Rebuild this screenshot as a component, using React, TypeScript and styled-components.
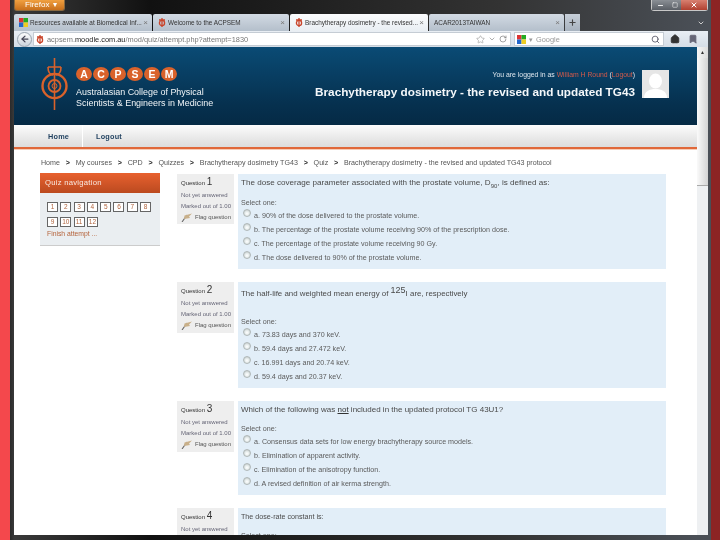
import React from "react";
import styled, { createGlobalStyle } from "styled-components";
import { ArrowLeft, Star, RotateCw, Search, Home, ChevronDown, Plus, Minus, Square, X, Bookmark } from "lucide-react";

const Global = createGlobalStyle`
  html, body { margin: 0; padding: 0; background: #000; }
  body { font-family: "Liberation Sans", Arial, sans-serif; }
`;
const Root = styled.div`
  width: 720px; height: 540px; overflow: hidden; display: flex;
  filter: blur(0.35px);
`;
const RedLeft = styled.div`width: 10px; background: #f4484c; flex: none;`;
const RedRight = styled.div`width: 9px; background: #8c2424; flex: none;`;
const Win = styled.div`
  flex: 1; min-width: 0; display: flex; flex-direction: column; padding: 0 3px 5px 4px;
  background: linear-gradient(90deg, #2a2a2a 0, #3a3a3a 0.6%, #111 20%, #333 70%, #4a4f56 98%);
`;
const TitleBar = styled.div`
  height: 14px; flex: none; display: flex; justify-content: space-between; align-items: flex-start;
`;
const FirefoxBtn = styled.div`
  width: 51px; height: 11px; background: linear-gradient(#f0a040, #c9701c); color: #fff;
  font-size: 8px; line-height: 10px; padding-left: 10px; box-sizing: border-box; border: 1px solid #8a6a40;
  border-top: none; border-radius: 0 0 3px 3px; display: flex; gap: 4px;
`;
const WinCtrls = styled.div`
  display: flex; height: 11px; width: 57px; border: 1px solid #c8c8c8; border-top: none; border-radius: 0 0 3px 3px; box-sizing: border-box;
`;
const WinBtn = styled.div<{ $w: number; $close?: boolean }>`
  width: ${p => p.$w}px; display: flex; align-items: center; justify-content: center; color: #fff;
  background: ${p => p.$close ? "linear-gradient(#d88070,#b04030)" : "linear-gradient(#8a8f95,#5a5f66)"};
`;
const TabRow = styled.div`
  height: 17px; flex: none; display: flex; gap: 1px; align-items: stretch;
`;
const Tab = styled.div<{ $w: number; $active?: boolean }>`
  width: ${p => p.$w}px; flex: none; display: flex; align-items: center; gap: 2px; padding: 0 4px 0 5px; box-sizing: border-box;
  border-radius: 2px 2px 0 0; font-size: 6.4px; color: #333; white-space: nowrap;
  background: ${p => p.$active ? "linear-gradient(#fbfcfd,#e9eef3)" : "linear-gradient(#d2dae3,#b4bfcb)"};
`;
const TabLabel = styled.span`flex: 1; min-width: 0;`;
const TabClose = styled.span`color: #777; font-size: 8px;`;
const NewTab = styled.div`
  width: 15px; flex: none; display: flex; align-items: center; justify-content: center; color: #444;
  background: linear-gradient(#c6ced8,#a7b2be);
`;
const AllTabs = styled.div`
  flex: 1; display: flex; justify-content: flex-end; align-items: center; color: #ccc; padding-right: 3px;
`;
const Toolbar = styled.div`
  height: 16px; flex: none; display: flex; align-items: center; gap: 3px; background: linear-gradient(#e9eef4,#d5dde6);
  padding-left: 3px; padding-right: 6px;
`;
const BackBtn = styled.div`
  width: 15px; height: 15px; border-radius: 50%; flex: none; background: linear-gradient(#fdfdfd,#ccd4dc); border: 1px solid #9aa5b0;
  box-sizing: border-box; display: flex; align-items: center; justify-content: center; color: #445;
`;
const UrlBar = styled.div`
  width: 478px; height: 14px; flex: none; background: #fff; border: 1px solid #c5ccd4; box-sizing: border-box; margin-left: -2px;
  display: flex; align-items: center; font-size: 7.4px; color: #777; gap: 3px; padding: 0 3px 0 2px;
`;
const UrlText = styled.span`flex: 1; white-space: nowrap; b { color: #222; font-weight: normal; }`;
const SearchBar = styled(UrlBar)`width: 150px; margin-left: 0; gap: 3px; color: #999;`;
const ToolIcon = styled.div`width: 15px; flex: none; display: flex; justify-content: center; color: #333;`;
const Viewport = styled.div`flex: 1; min-height: 0; display: flex;`;
const Page = styled.div`flex: 1; min-width: 0; background: #fff; overflow: hidden;`;
const Scrollbar = styled.div`
  width: 11px; flex: none; background: #eef0f2; display: flex; flex-direction: column; align-items: stretch;
`;
const ScrollBtn = styled.div`height: 11px; background: linear-gradient(90deg,#f6f6f6,#dcdcdc); color: #333; font-size: 5px; text-align: center; line-height: 11px;`;
const Thumb = styled.div`height: 127px; background: linear-gradient(90deg,#fafafa,#d4d4d4); border: 1px solid #aaa; border-width: 0 0 1px 0;`;
const Header = styled.header`
  height: 78px; background: linear-gradient(#0a4b75, #06304e 75%, #052a45); display: flex; align-items: flex-start;
  padding: 11px 28px 0 27px; box-sizing: border-box;
`;
const LogoWrap = styled.div`display: flex; gap: 8px; flex: none;`;
const Brand = styled.div`display: flex; flex-direction: column; padding-top: 9px;`;
const Letters = styled.div`display: flex; gap: 1px; margin-bottom: 6px;`;
const Letter = styled.span`
  width: 16px; height: 14px; border-radius: 50%; background: #d9622b; color: #fff; font-weight: bold; font-size: 10.5px;
  display: flex; align-items: center; justify-content: center;
`;
const BrandLine = styled.div`color: #f0f4f7; font-size: 8.95px; line-height: 11px; white-space: nowrap;`;
const HeaderRight = styled.div`flex: 1; display: flex; justify-content: flex-end; align-items: flex-start; gap: 7px; padding-top: 12px;`;
const HeaderText = styled.div`display: flex; flex-direction: column; align-items: flex-end;`;
const Logged = styled.div`color: #dfe7ee; font-size: 6.85px; line-height: 10px; white-space: nowrap; a { color: #d35a4a; }`;
const CourseTitle = styled.div`color: #f4f7fa; font-weight: bold; font-size: 11.75px; line-height: 14px; margin-top: 5px; white-space: nowrap;`;
const Avatar = styled.div`width: 27px; height: 28px; background: #e6e6e6; flex: none; overflow: hidden; display: flex;`;
const Nav = styled.nav`
  height: 24px; box-sizing: border-box; display: flex; background: linear-gradient(#fcfcfc,#dcdcdc);
  border-bottom: 2px solid #e0683a; box-shadow: 0 1px 0 #f7cdb8;
`;
const NavItem = styled.div<{ $w: number; $pad: number; $first?: boolean }>`
  width: ${p => p.$w}px; padding-left: ${p => p.$pad}px; box-sizing: border-box; font-size: 7.3px; font-weight: bold; line-height: 23px; letter-spacing: .2px;
  color: #1e3f5e; border-right: ${p => p.$first ? "1px solid #fff" : "none"};
`;
const Crumbs = styled.div`
  display: flex; gap: 5.8px; align-items: center; padding: 4px 0 0 27px; height: 24px; box-sizing: border-box; font-size: 7.1px; color: #555; white-space: nowrap;
`;
const Sep = styled.span`color: #222; font-weight: bold;`;
const Columns = styled.div`display: flex; align-items: flex-start; gap: 17px; padding-left: 26px;`;
const Block = styled.aside`width: 120px; flex: none; background: #eaeef1; border-bottom: 1px solid #ccc; height: 72px;`;
const BlockHead = styled.div`
  height: 20px; background: linear-gradient(#e8612f,#bb4a20); color: #f8e8e0; font-size: 7.7px; line-height: 20px; padding-left: 5px; letter-spacing: .25px;
`;
const NumGrid = styled.div`display: flex; flex-wrap: wrap; gap: 5px 2.3px; padding: 9px 4px 0 7px;`;
const Num = styled.span`
  width: 11px; height: 10px; box-sizing: border-box; background: #fff; border: 1.3px solid #666; color: #b0653f; font-size: 6.5px; line-height: 8px; text-align: center;
`;
const Finish = styled.div`font-size: 6.8px; color: #b5643c; padding: 2px 0 0 7px; line-height: 9px;`;
const Questions = styled.div`width: 489px; flex: none; display: flex; flex-direction: column; gap: 13px; padding-top: 1px;`;
const Q = styled.section`display: flex; gap: 4px; align-items: flex-start;`;
const Info = styled.div<{ $h: number }>`
  width: 57px; height: ${p => p.$h}px; flex: none; background: #eeeeee; padding: 1px 0 0 4px; box-sizing: border-box; color: #555; font-size: 6px;
`;
const QNo = styled.div`line-height: 14px; white-space: nowrap; font-size: 6px; color: #333; b { font-size: 10px; font-weight: normal; }`;
const InfoLine = styled.div`line-height: 10.5px; white-space: nowrap; color: #667;`;
const FlagRow = styled.div`display: flex; align-items: center; gap: 2px; margin-top: 1px; line-height: 11px; white-space: nowrap;`;
const Content = styled.div<{ $top: number; $bottom: number }>`
  flex: 1; background: #e2eef8; padding: ${p => p.$top}px 0 ${p => p.$bottom}px 3px; color: #5a5a5a; font-size: 7.15px;
`;
const QText = styled.div<{ $gap: number; $size: number }>`
  line-height: 14px; margin-bottom: ${p => p.$gap}px; white-space: nowrap; color: #4a4a4a; font-size: ${p => p.$size}px;
  sup { font-size: 9px; line-height: 0; vertical-align: 3px; }
  sub { font-size: 6px; line-height: 0; }
  u { color: #333; }
`;
const Select = styled.div`line-height: 11px;`;
const Option = styled.div`display: flex; height: 14px; align-items: flex-start; line-height: 14px; white-space: nowrap; gap: 3px; padding-left: 2px;`;
const Radio = styled.span`
  width: 8px; height: 8px; flex: none; border-radius: 50%; margin-top: 0; box-sizing: border-box; border: 1px solid #b0b8b8;
  background: radial-gradient(circle at 50% 60%, #fff 0, #e8eeee 40%, #b8c0c0 100%);
`;

const Logo = () => (
  <svg width="27" height="52" viewBox="0 0 27 52" fill="none" stroke="#d9622b">
    <path d="M13.5 0V52" strokeWidth="1.6" />
    <path d="M7 9h13M7 9c0 6 2 7 5 8M20 9c0 6-2 7-5 8" strokeWidth="1.6" />
    <circle cx="13.5" cy="28" r="12" strokeWidth="2.4" />
    <circle cx="13.5" cy="28" r="6" strokeWidth="1.8" />
    <circle cx="13.5" cy="28" r="2.5" strokeWidth="1" />
  </svg>
);
const Colors = () => (
  <svg width="9" height="9" viewBox="0 0 9 9" style={{ flex: "none" }}>
    <rect width="4.5" height="4.5" fill="#d33" /><rect x="4.5" width="4.5" height="4.5" fill="#2a2" />
    <rect y="4.5" width="4.5" height="4.5" fill="#26c" /><rect x="4.5" y="4.5" width="4.5" height="4.5" fill="#ec2" />
  </svg>
);
const Fav = () => (
  <svg width="8" height="9" viewBox="0 0 8 9" fill="none" stroke="#c9442a" strokeWidth="1.3" style={{ flex: "none" }}>
    <path d="M4 0v9M1 2h6" /><circle cx="4" cy="5" r="2.6" />
  </svg>
);
const Flag = () => (
  <svg width="12" height="9" viewBox="0 0 12 9" fill="none" style={{ flex: "none" }}>
    <path d="M1 9L6 2" stroke="#666" strokeWidth="1.1" /><path d="M3.5 2.5L11 .5 8 3.5 9 5 3 6z" fill="#c9b08a" />
  </svg>
);
const Silhouette = () => (
  <svg width="27" height="28" viewBox="0 0 27 28">
    <ellipse cx="13.5" cy="11" rx="6.5" ry="7.5" fill="#fff" /><path d="M2 28c0-7 6-9 11.5-9S25 21 25 28z" fill="#fff" />
  </svg>
);

type QD = { n: number; h: number; top: number; gap: number; bottom: number; size: number; text: React.ReactNode; opts: string[] };
const data: QD[] = [
  { n: 1, h: 50, top: 2, gap: 8, bottom: 4, size: 8.1, text: <>The dose coverage parameter associated with the prostate volume, D<sub>90</sub>, is defined as:</>,
    opts: ["a. 90% of the dose delivered to the prostate volume.", "b. The percentage of the prostate volume receiving 90% of the prescription dose.", "c. The percentage of the prostate volume receiving 90 Gy.", "d. The dose delivered to 90% of the prostate volume."] },
  { n: 2, h: 51, top: 5, gap: 16, bottom: 4, size: 7.9, text: <>The half-life and weighted mean energy of <sup>125</sup>I are, respectively</>,
    opts: ["a. 73.83 days and 370 keV.", "b. 59.4 days and 27.472 keV.", "c. 16.991 days and 20.74 keV.", "d. 59.4 days and 20.37 keV."] },
  { n: 3, h: 51, top: 2, gap: 7, bottom: 4, size: 8, text: <>Which of the following was <u>not</u> included in the updated protocol TG 43U1?</>,
    opts: ["a. Consensus data sets for low energy brachytherapy source models.", "b. Elimination of apparent activity.", "c. Elimination of the anisotropy function.", "d. A revised definition of air kerma strength."] },
  { n: 4, h: 51, top: 2, gap: 7, bottom: 5, size: 7.15, text: <>The dose-rate constant is:</>, opts: [] },
];

export default function App() {
  return (
    <Root>
      <Global />
      <RedLeft />
      <Win>
        <TitleBar>
          <FirefoxBtn>Firefox <span>▾</span></FirefoxBtn>
          <WinCtrls>
            <WinBtn $w={16}><Minus size={7} strokeWidth={3} /></WinBtn>
            <WinBtn $w={13}><Square size={6} strokeWidth={2} /></WinBtn>
            <WinBtn $w={26} $close><X size={8} strokeWidth={3} /></WinBtn>
          </WinCtrls>
        </TitleBar>
        <TabRow>
          <Tab $w={138}><Colors /><TabLabel>Resources available at Biomedical Inf...</TabLabel><TabClose>×</TabClose></Tab>
          <Tab $w={136}><Fav /><TabLabel>Welcome to the ACPSEM</TabLabel><TabClose>×</TabClose></Tab>
          <Tab $w={138} $active><Fav /><TabLabel>Brachytherapy dosimetry - the revised...</TabLabel><TabClose>×</TabClose></Tab>
          <Tab $w={135}><TabLabel>ACAR2013TAIWAN</TabLabel><TabClose>×</TabClose></Tab>
          <NewTab><Plus size={9} strokeWidth={3} /></NewTab>
          <AllTabs><ChevronDown size={8} strokeWidth={3} /></AllTabs>
        </TabRow>
        <Toolbar>
          <BackBtn><ArrowLeft size={10} strokeWidth={3} /></BackBtn>
          <UrlBar>
            <Fav />
            <UrlText>acpsem.<b>moodle.com.au</b>/mod/quiz/attempt.php?attempt=1830</UrlText>
            <Star size={9} color="#aaa" /><ChevronDown size={8} color="#888" /><RotateCw size={8} color="#777" />
          </UrlBar>
          <SearchBar>
            <Colors /><span>▾</span><UrlText>Google</UrlText><Search size={9} color="#445" />
          </SearchBar>
          <ToolIcon><Home size={10} fill="#333" /></ToolIcon>
          <ToolIcon><Bookmark size={10} fill="#667" color="#667" /></ToolIcon>
        </Toolbar>
        <Viewport>
          <Page>
            <Header>
              <LogoWrap>
                <Logo />
                <Brand>
                  <Letters>{"ACPSEM".split("").map(l => <Letter key={l}>{l}</Letter>)}</Letters>
                  <BrandLine>Australasian College of Physical</BrandLine>
                  <BrandLine>Scientists &amp; Engineers in Medicine</BrandLine>
                </Brand>
              </LogoWrap>
              <HeaderRight>
                <HeaderText>
                  <Logged>You are logged in as <a>William H Round</a> (<a>Logout</a>)</Logged>
                  <CourseTitle>Brachytherapy dosimetry - the revised and updated TG43</CourseTitle>
                </HeaderText>
                <Avatar><Silhouette /></Avatar>
              </HeaderRight>
            </Header>
            <Nav>
              <NavItem $w={69} $pad={34} $first>Home</NavItem>
              <NavItem $w={90} $pad={13}>Logout</NavItem>
            </Nav>
            <Crumbs>
              {["Home", "My courses", "CPD", "Quizzes", "Brachytherapy dosimetry TG43", "Quiz", "Brachytherapy dosimetry - the revised and updated TG43 protocol"].map((c, i, a) => (
                <React.Fragment key={c}>
                  <span>{c}</span>{i < a.length - 1 && <Sep>&gt;</Sep>}
                </React.Fragment>
              ))}
            </Crumbs>
            <Columns>
              <Block>
                <BlockHead>Quiz navigation</BlockHead>
                <NumGrid>{Array.from({ length: 12 }, (_, i) => <Num key={i}>{i + 1}</Num>)}</NumGrid>
                <Finish>Finish attempt ...</Finish>
              </Block>
              <Questions>
                {data.map(q => (
                  <Q key={q.n}>
                    <Info $h={q.h}>
                      <QNo>Question <b>{q.n}</b></QNo>
                      <InfoLine>Not yet answered</InfoLine>
                      <InfoLine>Marked out of 1.00</InfoLine>
                      <FlagRow><Flag />Flag question</FlagRow>
                    </Info>
                    <Content $top={q.top} $bottom={q.bottom}>
                      <QText $gap={q.gap} $size={q.size}>{q.text}</QText>
                      <Select>Select one:</Select>
                      {q.opts.map(o => <Option key={o}><Radio />{o}</Option>)}
                    </Content>
                  </Q>
                ))}
              </Questions>
            </Columns>
          </Page>
          <Scrollbar>
            <ScrollBtn>▲</ScrollBtn>
            <Thumb />
          </Scrollbar>
        </Viewport>
      </Win>
      <RedRight />
    </Root>
  );
}
